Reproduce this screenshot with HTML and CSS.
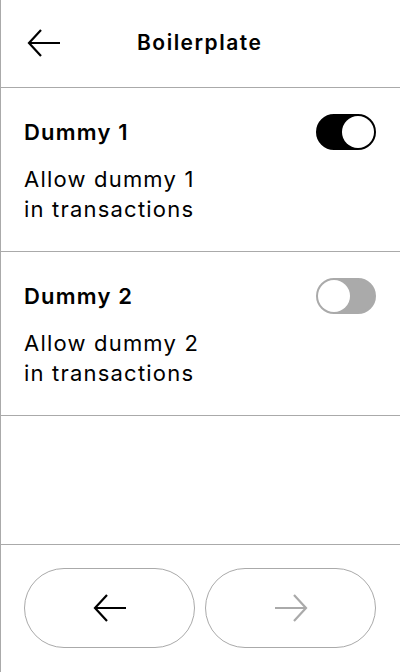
FILE: index.html
```html
<!DOCTYPE html>
<html>
<head>
<meta charset="utf-8">
<link rel="stylesheet" href="styles.css">
</head>
<body>
<div class="app">
  <header class="header">
    <button class="icon-btn back" aria-label="Back">
      <svg width="34" height="28" viewBox="0 0 34 28"><path d="M33 14H2M14 1L2 14l12 13" fill="none" stroke="#000" stroke-width="2.2"/></svg>
    </button>
    <h1 class="title">Boilerplate</h1>
  </header>
  <section class="row">
    <div class="row-top">
      <h2 class="row-title">Dummy 1</h2>
      <span class="toggle on"><span class="knob"></span></span>
    </div>
    <p class="row-desc">Allow dummy 1<br>in transactions</p>
  </section>
  <section class="row">
    <div class="row-top">
      <h2 class="row-title">Dummy 2</h2>
      <span class="toggle off"><span class="knob"></span></span>
    </div>
    <p class="row-desc">Allow dummy 2<br>in transactions</p>
  </section>
  <div class="spacer"></div>
  <footer class="footer">
    <button class="nav-btn">
      <svg width="34" height="28" viewBox="0 0 34 28"><path d="M33 14H2M14 1L2 14l12 13" fill="none" stroke="#000" stroke-width="2.2"/></svg>
    </button>
    <button class="nav-btn disabled">
      <svg width="34" height="28" viewBox="0 0 34 28"><path d="M1 14h31M20 1l12 13-12 13" fill="none" stroke="#aaa" stroke-width="2.2"/></svg>
    </button>
  </footer>
</div>
</body>
</html>
```
FILE: styles.css
```css
* { box-sizing: border-box; }
html, body { margin: 0; padding: 0; background: #fff; }
body { font-family: Inter, "Noto Sans", sans-serif; color: #000; }
.app {
  width: 400px;
  height: 672px;
  border-left: 1px solid #aaa;
  display: flex;
  flex-direction: column;
}
.header {
  height: 88px;
  border-bottom: 1px solid #aaa;
  display: flex;
  align-items: center;
  padding: 0 0 1px 26px;
}
.icon-btn {
  border: 0;
  background: none;
  padding: 0;
  display: flex;
  width: 34px;
  height: 28px;
}
.title {
  margin: 0 0 0 76px;
  font-size: 21px;
  font-weight: 600;
  line-height: 28px;
  letter-spacing: 1.5px;
}
.row {
  height: 164px;
  border-bottom: 1px solid #aaa;
  padding: 26px 24px 0 23px;
}
.row-top {
  display: flex;
  align-items: center;
  justify-content: space-between;
  height: 36px;
}
.row-title {
  margin: 0;
  font-size: 22px;
  font-weight: 600;
  line-height: 28px;
  letter-spacing: 1.2px;
}
.row-desc {
  margin: 14px 0 0;
  font-size: 22px;
  line-height: 30px;
  font-weight: 400;
  letter-spacing: 1.2px;
}
.toggle {
  width: 60px;
  height: 36px;
  border-radius: 18px;
  border: 2px solid #000;
  background: #000;
  display: flex;
  align-items: center;
  justify-content: flex-end;
}
.toggle .knob {
  width: 32px;
  height: 32px;
  border-radius: 50%;
  background: #fff;
}
.toggle.off {
  border-color: #aaa;
  background: #aaa;
  justify-content: flex-start;
}
.spacer { flex: 1; }
.footer {
  height: 128px;
  border-top: 1px solid #aaa;
  display: flex;
  gap: 10px;
  padding: 23px 24px 24px 23px;
}
.nav-btn {
  flex: 1;
  height: 80px;
  border: 1.5px solid #aaa;
  border-radius: 40px;
  background: #fff;
  display: flex;
  align-items: center;
  justify-content: center;
  padding: 0;
}
```
